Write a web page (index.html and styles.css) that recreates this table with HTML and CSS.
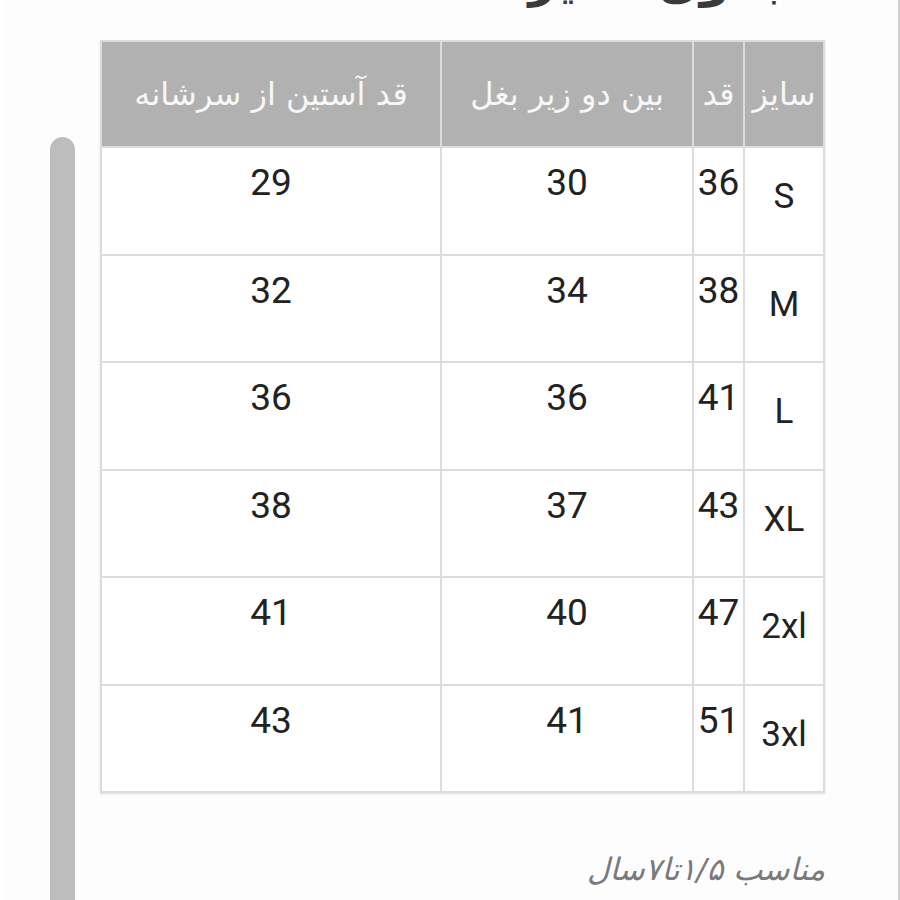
FILE: index.html
```html
<!DOCTYPE html>
<html lang="fa" dir="rtl">
<head>
<meta charset="utf-8">
<link rel="stylesheet" href="styles.css">
</head>
<body>
<div class="page">
  <div class="scrollbar"></div>
  <div class="content">
    <div class="title-clip"><h1 class="title">جدول سایز</h1></div>
    <table class="size-table">
      <colgroup>
        <col class="c-size"><col class="c-len"><col class="c-chest"><col class="c-sleeve">
      </colgroup>
      <thead>
        <tr><th>سایز</th><th>قد</th><th>بین دو زیر بغل</th><th>قد آستین از سرشانه</th></tr>
      </thead>
      <tbody>
        <tr><td class="sz">S</td><td>36</td><td>30</td><td>29</td></tr>
        <tr><td class="sz">M</td><td>38</td><td>34</td><td>32</td></tr>
        <tr><td class="sz">L</td><td>41</td><td>36</td><td>36</td></tr>
        <tr><td class="sz">XL</td><td>43</td><td>37</td><td>38</td></tr>
        <tr><td class="sz">2xl</td><td>47</td><td>40</td><td>41</td></tr>
        <tr><td class="sz">3xl</td><td>51</td><td>41</td><td>43</td></tr>
      </tbody>
    </table>
    <p class="note">مناسب ۱/۵تا۷سال</p>
  </div>
</div>
</body>
</html>
```

FILE: styles.css
```css
html, body {
  margin: 0;
  padding: 0;
  background: #fff;
}
.page {
  position: relative;
  width: 896px;
  height: 900px;
  border-right: 2px solid #cfcfcf;
  overflow: hidden;
  background: #fdfdfd;
}
.scrollbar {
  position: absolute;
  left: 48px;
  top: 137px;
  width: 25px;
  height: 800px;
  border-radius: 13px 13px 0 0;
  background: #bdbdbd;
}
.content {
  width: 723px;
  margin-right: 73px;
  margin-left: auto;
  display: flex;
  flex-direction: column;
}
.title-clip {
  height: 40px;
  overflow: hidden;
  display: flex;
  justify-content: flex-start;
}
.title {
  margin: -54px 33px 0 0;
  font-family: "DejaVu Sans", sans-serif;
  font-weight: bold;
  font-size: 48px;
  line-height: 66px;
  color: #3a3a3a;
}
.size-table {
  width: 723px;
  border-collapse: collapse;
  table-layout: fixed;
  direction: rtl;
  box-shadow: 0 1px 2px rgba(0,0,0,0.12);
}
.c-size { width: 80px; }
.c-len { width: 51px; }
.c-chest { width: 252px; }
.c-sleeve { width: 340px; }
.size-table th,
.size-table td {
  border: 2px solid #dcdcdc;
  padding: 0;
  text-align: center;
}
.size-table thead tr { height: 106px; }
.size-table th {
  background: #b1b1b1;
  color: #f7f7f7;
  font-family: "DejaVu Sans", "Noto Sans", sans-serif;
  font-weight: normal;
  font-size: 32px;
  vertical-align: middle;
  white-space: nowrap;
}
.size-table tbody tr { height: 107.5px; }
.size-table td {
  background: #fff;
  color: #222;
  font-family: Roboto, "Liberation Sans", sans-serif;
  font-size: 37px;
  vertical-align: top;
  padding-top: 14px;
  line-height: 41px;
}
.size-table td.sz {
  padding-top: 28px;
  font-size: 35px;
}
.note {
  margin: 56px 0 0 0;
  text-align: right;
  font-family: "DejaVu Sans", sans-serif;
  font-style: italic;
  font-size: 31px;
  color: #7a7a7a;
  line-height: 40px;
}
```
